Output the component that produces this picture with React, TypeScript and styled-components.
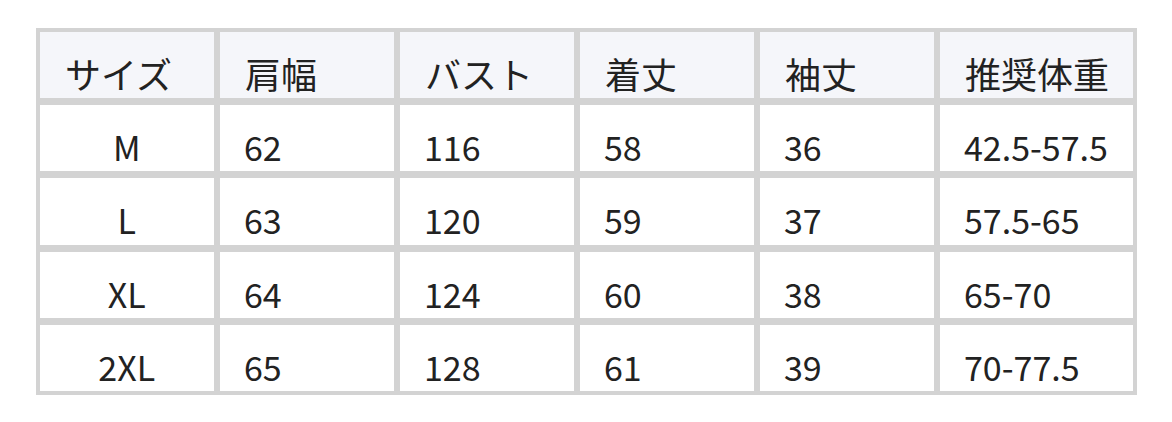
import React from 'react';
import styled, { createGlobalStyle } from 'styled-components';

const GlobalStyle = createGlobalStyle`
  html, body {
    margin: 0;
    padding: 0;
    background: #ffffff;
  }
  body {
    font-family: "Noto Sans CJK JP", "Noto Sans", sans-serif;
    color: #222222;
  }
`;

const Page = styled.div`
  padding: 28px 0 0 36px;
`;

const SizeTable = styled.div`
  box-sizing: border-box;
  width: 1101px;
  display: grid;
  grid-template-columns: repeat(5, 173.5px) 193px;
  grid-auto-rows: 66.2px;
  column-gap: 6.5px;
  row-gap: 7px;
  padding: 4px;
  background-color: #d3d3d3;
`;

const HeaderCell = styled.div`
  box-sizing: border-box;
  background-color: #f5f6fa;
  padding: 23px 0 0 25px;
  font-size: 36px;
  line-height: 1;
  white-space: nowrap;
`;

const Cell = styled.div<{ $center?: boolean }>`
  box-sizing: border-box;
  background-color: #ffffff;
  padding-top: 25px;
  padding-left: ${(p) => (p.$center ? '0' : '24px')};
  text-align: ${(p) => (p.$center ? 'center' : 'left')};
  font-size: 34px;
  line-height: 1;
  white-space: nowrap;
`;

const headers = ['サイズ', '肩幅', 'バスト', '着丈', '袖丈', '推奨体重'];

const rows = [
  ['M', '62', '116', '58', '36', '42.5-57.5'],
  ['L', '63', '120', '59', '37', '57.5-65'],
  ['XL', '64', '124', '60', '38', '65-70'],
  ['2XL', '65', '128', '61', '39', '70-77.5'],
];

export default function App() {
  return (
    <>
      <GlobalStyle />
      <Page>
        <SizeTable>
          {headers.map((h) => (
            <HeaderCell key={h}>{h}</HeaderCell>
          ))}
          {rows.map((row) =>
            row.map((value, i) => (
              <Cell key={row[0] + i} $center={i === 0}>
                {value}
              </Cell>
            ))
          )}
        </SizeTable>
      </Page>
    </>
  );
}
